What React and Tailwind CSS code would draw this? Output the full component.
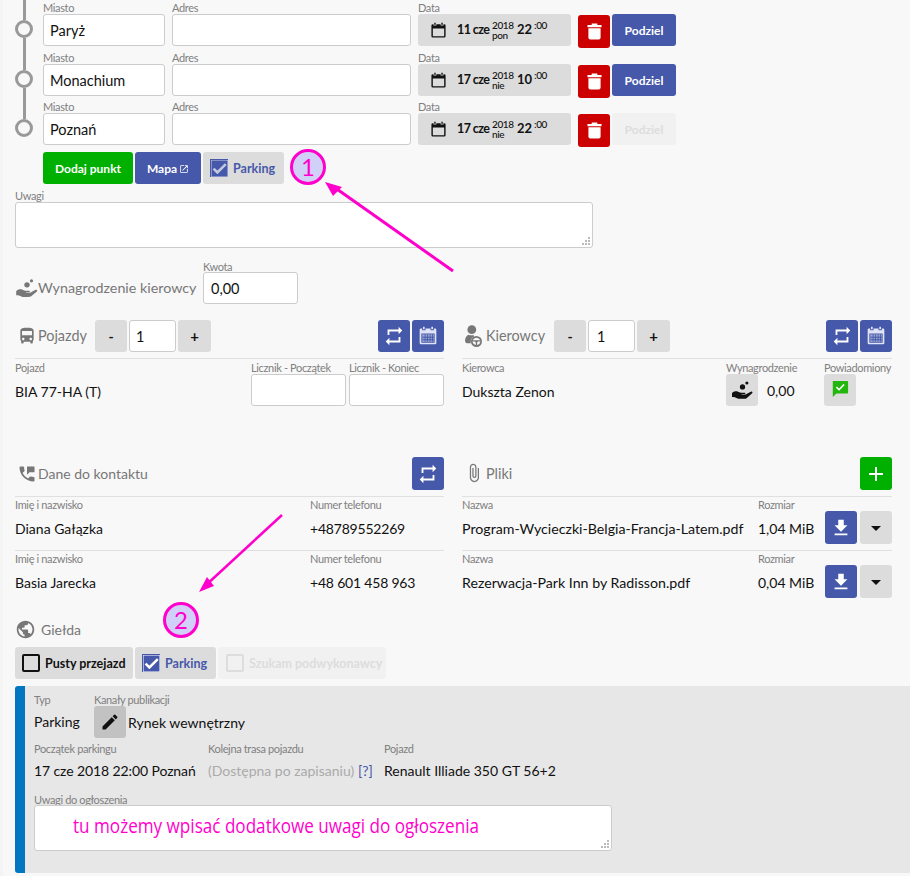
import React from "react";
import {
  MdRepeat,
  MdDirectionsBus,
  MdPermPhoneMsg,
  MdAttachFile,
  MdPublic,
  MdEdit,
  MdAdd,
  MdFileDownload,
  MdArrowDropDown,
  MdCheck,
  MdOpenInNew,
} from "react-icons/md";

const TrashIcon = ({ className }) => (
  <svg viewBox="0 0 16 17" className={className} fill="currentColor">
    <path d="M5 0h6v1.500h4.500V4H.5V1.500H5z" />
    <path d="M1.500 5h13v10a2 2 0 0 1-2 2h-9a2 2 0 0 1-2-2z" />
  </svg>
);

const CalendarIcon = ({ className }) => (
  <svg viewBox="0 0 24 24" className={className} fill="currentColor">
    <path d="M6 1h2v3H6zM16 1h2v3h-2z" />
    <path
      fillRule="evenodd"
      d="M4 3h1v2h4V3h6v2h4V3h1a2 2 0 0 1 2 2v15a2 2 0 0 1-2 2H4a2 2 0 0 1-2-2V5a2 2 0 0 1 2-2zm0 6v11h16V9z"
    />
  </svg>
);

const GridCalendarIcon = ({ className }) => (
  <svg viewBox="0 0 24 24" className={className} fill="currentColor">
    <path d="M6 1h2v3H6zM16 1h2v3h-2z" />
    <path
      fillRule="evenodd"
      d="M3.500 3H5v2h4V3h6v2h4V3h1.500A1.500 1.500 0 0 1 22 4.500v16a1.500 1.500 0 0 1-1.500 1.500h-17A1.500 1.500 0 0 1 2 20.500v-16A1.500 1.500 0 0 1 3.500 3zM4 9v11h16V9z"
    />
    <path d="M5 10h14v9H5z" opacity="0.55" />
    <path d="M8 10h1v9H8zM11 10h1v9h-1zM14 10h1v9h-1zM17 10h1v9h-1zM5 13h14v1H5zM5 16h14v1H5z" fill="#4658a9" />
  </svg>
);

const HandCoinsIcon = ({ className }) => (
  <svg viewBox="0 0 24 20" className={className} fill="currentColor">
    <circle cx="17" cy="2" r="1.800" />
    <circle cx="12" cy="6.500" r="3" />
    <path d="M0 13.500c2-2 4.500-2.500 7-1.500l3 1h4.500c1 0 1 1.600 0 1.600H11v.6h4.500l6-3.200c1.500-.7 2.500.8 1.500 1.800L17 19c-1 .8-2 1-3.500 1H8c-1.500 0-2.500-1-4-1.500-1.500-.4-3-.5-4-.5z" />
  </svg>
);

const DriverIcon = ({ className }) => (
  <svg viewBox="0 0 20 26" className={className} fill="currentColor">
    <circle cx="8" cy="5.500" r="5.200" />
    <path d="M4 11.500c1.500.8 4.500.8 6 .2.300 1 .6 1.500 1 1.800-2.500 1-4.300 3.300-4.300 6 0 .8.100 1.500.3 2H3.500C1.500 21.500 0 20.500 0 18.500c0-3 1.500-5.500 4-7z" />
    <path
      fillRule="evenodd"
      d="M13.500 13a6.500 6.500 0 1 1 0 13 6.500 6.500 0 0 1 0-13zM9 18h9a4.900 4.900 0 0 0-9 0zm-.3 1.500a4.900 4.900 0 0 0 4 4v-2.700l-1-1.300zm9.600 0h-3l-1 1.300v2.700a4.900 4.900 0 0 0 4-4z"
    />
  </svg>
);

const NotifiedIcon = ({ className }) => (
  <svg viewBox="0 0 20 20" className={className}>
    <path d="M2 1h16a1 1 0 0 1 1 1v12a1 1 0 0 1-1 1H6l-4 4z" fill="#22b60f" />
    <path d="M6 8l3 2.800L14.500 5" fill="none" stroke="#fff" strokeWidth="1.800" />
  </svg>
);

const Label = ({ children, className = "" }) => (
  <div className={`text-[11px] leading-[14px] tracking-[-0.35px] text-[#808080] whitespace-nowrap ${className}`}>
    {children}
  </div>
);

const TextBox = ({ value, className = "" }) => (
  <input
    readOnly
    value={value || ""}
    className={`block bg-white border border-[#cccccc] rounded-[3px] px-[6px] text-[14.5px] text-[#111111] outline-none ${className}`}
  />
);

const NoteBox = ({ children, className = "" }) => (
  <div className={`relative h-[46px] bg-white border border-[#cccccc] rounded-[3px] ${className}`}>
    {children}
    <svg className="absolute right-[1px] bottom-[1px]" width="9" height="9" fill="#bbbbbb">
      <path d="M6 0h2v2H6zM3 3h2v2H3zM6 3h2v2H6zM0 6h2v2H0zM3 6h2v2H3zM6 6h2v2H6z" />
    </svg>
  </div>
);

const ActionButton = ({ children, className = "" }) => (
  <button className={`flex items-center justify-center rounded-[3px] shrink-0 ${className}`}>
    {children}
  </button>
);

const Stop = ({ city, day, year, weekday, hour, rowClass, last, canSplit = true }) => (
  <div className={`flex ${rowClass}`}>
    <div className="w-[28px] shrink-0 flex flex-col items-start">
      <div className="w-[18px] flex flex-col items-center h-full">
        <div className="w-[3px] h-[20px] bg-[#999999]" />
        <div className="w-[18px] h-[18px] shrink-0 rounded-full border-[3px] border-[#999999]" />
        {!last && <div className="w-[3px] flex-1 bg-[#999999]" />}
      </div>
    </div>
    <div className="w-[129px] shrink-0">
      <Label className="pt-[1px] h-[14px]">Miasto</Label>
      <TextBox value={city} className="w-[122px] h-[32px]" />
    </div>
    <div className="w-[246px] shrink-0">
      <Label className="pt-[1px] h-[14px]">Adres</Label>
      <TextBox className="w-[239px] h-[32px]" />
    </div>
    <div className="w-[160px] shrink-0">
      <Label className="pt-[1px] h-[14px]">Data</Label>
      <div className="w-[153px] h-[32px] bg-[#dcdcdc] rounded-[3px] flex items-center pl-[12px] text-[#111111]">
        <CalendarIcon className="w-[17px] h-[17px] shrink-0" />
        <span className="ml-[10px] text-[12.5px] font-bold tracking-[-0.6px] w-[35px] whitespace-nowrap">{day}</span>
        <span className="flex flex-col text-[10px] leading-[10px] tracking-[-0.4px] w-[25px] font-medium">
          <span>{year}</span>
          <span>{weekday}</span>
        </span>
        <span className="text-[13px] font-bold">{hour}</span>
        <span className="text-[10px] leading-[10px] tracking-[-0.4px] font-medium ml-[2px] mb-[10px]">:00</span>
      </div>
    </div>
    <div className="pt-[15px] flex items-start">
      <ActionButton className="w-[32px] h-[33px] bg-[#cc0000] text-white">
        <TrashIcon className="w-[15px] h-[17px]" />
      </ActionButton>
      <ActionButton
        className={`w-[64px] h-[32px] ml-[2px] -mt-[1px] pt-[1px] text-[12px] font-bold ${
          canSplit ? "bg-[#4658a9] text-white" : "bg-[#f1f1f1] text-[#dddddd]"
        }`}
      >
        Podziel
      </ActionButton>
    </div>
  </div>
);

const SectionTitle = ({ icon, children, className = "" }) => (
  <div className={`flex items-center text-[#777777] whitespace-nowrap ${className}`}>
    <span className="w-[23px] flex justify-center shrink-0">{icon}</span>
    {children}
  </div>
);

const Stepper = ({ inputClass }) => (
  <div className="flex items-center">
    <ActionButton className="w-[32px] h-[32px] bg-[#dcdcdc] text-[14px] font-bold text-[#111111]">-</ActionButton>
    <TextBox value="1" className={`w-[47px] h-[32px] mx-[2px] ${inputClass}`} />
    <ActionButton className="w-[33px] h-[32px] bg-[#dcdcdc] text-[15px] font-bold text-[#111111]">+</ActionButton>
  </div>
);

const BlueButtons = () => (
  <div className="flex gap-[2px]">
    <ActionButton className="w-[32px] h-[32px] bg-[#4658a9] text-white">
      <MdRepeat size={22} />
    </ActionButton>
    <ActionButton className="w-[32px] h-[32px] bg-[#4658a9] text-[#dfe3f5]">
      <GridCalendarIcon className="w-[20px] h-[20px]" />
    </ActionButton>
  </div>
);

const CheckTile = ({ checked, disabled, dark, checkClass = "text-white", children, className = "" }) => (
  <div
    className={`h-[32px] flex items-center rounded-[3px] pl-[7px] text-[12.5px] font-bold whitespace-nowrap ${
      disabled ? "bg-[#f1f1f1] text-[#dddddd]" : "bg-[#dcdcdc]"
    } ${dark ? "text-[#111111]" : ""} ${!disabled && !dark ? "text-[#4658a9]" : ""} ${className}`}
  >
    {checked ? (
      <span className={`w-[18px] h-[18px] mr-[5px] bg-[#4658a9] flex items-center justify-center ${checkClass}`}>
        <MdCheck size={17} stroke="currentColor" strokeWidth={1.5} />
      </span>
    ) : (
      <span
        className={`w-[18px] h-[18px] mr-[5px] rounded-[2px] border-[2.5px] ${
          disabled ? "border-[#dddddd]" : "border-[#111111]"
        }`}
      />
    )}
    <span className="pt-[2px]">{children}</span>
  </div>
);

const Person = ({ name, phone }) => (
  <div className="border-t border-[#e0e0e0] h-[54px] flex">
    <div className="w-[295px] shrink-0">
      <Label className="mt-[1px]">Imię i nazwisko</Label>
      <div className="text-[14px] leading-[20px] mt-[7px] text-[#111111]">{name}</div>
    </div>
    <div>
      <Label className="mt-[1px]">Numer telefonu</Label>
      <div className="text-[14px] leading-[20px] mt-[7px] text-[#111111] tracking-[-0.2px]">{phone}</div>
    </div>
  </div>
);

const FileRow = ({ name, size }) => (
  <div className="border-t border-[#e0e0e0] h-[54px] flex">
    <div className="w-[296px] shrink-0">
      <Label className="mt-[1px]">Nazwa</Label>
      <div className="text-[14.2px] leading-[20px] mt-[7px] text-[#111111] whitespace-nowrap">{name}</div>
    </div>
    <div className="w-[67px] shrink-0">
      <Label className="mt-[1px]">Rozmiar</Label>
      <div className="text-[14px] leading-[20px] mt-[7px] text-[#111111] text-right w-[56px] whitespace-nowrap">{size}</div>
    </div>
    <div className="flex gap-[3px] mt-[14px]">
      <ActionButton className="w-[32px] h-[33px] bg-[#4658a9] text-white">
        <MdFileDownload size={22} />
      </ActionButton>
      <ActionButton className="w-[32px] h-[33px] bg-[#dcdcdc] text-[#111111]">
        <MdArrowDropDown size={24} />
      </ActionButton>
    </div>
  </div>
);

// arrows and numbered markers drawn over the page
const Annotations = () => (
  <svg className="absolute left-0 top-0 pointer-events-none" width="910" height="876">
    <g stroke="#ff00cc" fill="none">
      <path d="M453 271L334 187" strokeWidth="3" />
      <path d="M282 515L205 586" strokeWidth="2.500" />
      <circle cx="308" cy="167" r="16.500" fill="#d0d0f8" strokeWidth="3" />
      <circle cx="181" cy="620" r="16.500" fill="#d0d0f8" strokeWidth="3" />
    </g>
    <path d="M325 182L342 187L333 196Z" fill="#ff00cc" />
    <path d="M199 592L207 577L214 586Z" fill="#ff00cc" />
  </svg>
);

export default function App() {
  return (
    <div
      className="relative w-[910px] h-[876px] overflow-hidden bg-[#f4f4f4] text-[#111111]"
      style={{ fontFamily: "Lato, sans-serif" }}
    >
      <div className="ml-[3px] h-full bg-[#f8f8f8] pl-[12px]">
        <Stop city="Paryż" day="11 cze" year="2018" weekday="pon" hour="22" rowClass="h-[50px]" />
        <Stop city="Monachium" day="17 cze" year="2018" weekday="nie" hour="10" rowClass="h-[49px]" />
        <Stop city="Poznań" day="17 cze" year="2018" weekday="nie" hour="22" rowClass="h-[47px]" last canSplit={false} />

        <div className="flex gap-[2px] ml-[28px] mt-[6px]">
          <ActionButton className="w-[90px] h-[32px] pt-[1px] bg-[#00b000] text-white text-[12px] font-bold">Dodaj punkt</ActionButton>
          <ActionButton className="w-[66px] h-[32px] pt-[2px] bg-[#4658a9] text-white text-[12px] font-bold">
            Mapa
            <MdOpenInNew size={10} className="ml-[2px]" />
          </ActionButton>
          <CheckTile checked checkClass="text-[#c5cae0]" className="w-[81px]">Parking</CheckTile>
        </div>

        <Label className="mt-[5px] h-[13px]">Uwagi</Label>
        <NoteBox className="w-[578px]" />

        <div className="flex items-end mt-[12px]">
          <div className="h-[32px] flex items-center w-[188px]">
            <SectionTitle className="text-[14.3px]" icon={<HandCoinsIcon className="w-[22px] h-[18px]" />}>
              Wynagrodzenie kierowcy
            </SectionTitle>
          </div>
          <div>
            <Label className="h-[12px]">Kwota</Label>
            <TextBox value="0,00" className="w-[95px] h-[32px] pl-[7px]" />
          </div>
        </div>

        <div className="grid grid-cols-[429px_430px] gap-x-[18px] mt-[16px]">
          <div>
            <div className="flex items-center h-[32px]">
              <SectionTitle className="w-[80px] text-[14.4px]" icon={<MdDirectionsBus size={20} />}>Pojazdy</SectionTitle>
              <Stepper inputClass="pl-[6px]" />
              <div className="ml-auto">
                <BlueButtons />
              </div>
            </div>
            <div className="mt-[6px] border-t border-[#e0e0e0] h-[99px] flex">
              <div className="w-[236px] shrink-0">
                <Label className="mt-[2px]">Pojazd</Label>
                <div className="text-[14px] leading-[20px] mt-[7px] text-[#111111]">BIA 77-HA (T)</div>
              </div>
              <div className="w-[98px] shrink-0">
                <Label className="mt-[2px] h-[13px]">Licznik - Początek</Label>
                <TextBox className="w-[95px] h-[32px]" />
              </div>
              <div>
                <Label className="mt-[2px] h-[13px]">Licznik - Koniec</Label>
                <TextBox className="w-[95px] h-[32px]" />
              </div>
            </div>
          </div>

          <div>
            <div className="flex items-center h-[32px]">
              <SectionTitle className="w-[92px] text-[14.4px]" icon={<DriverIcon className="w-[17px] h-[22px]" />}>
                <span className="ml-[1px]">Kierowcy</span>
              </SectionTitle>
              <Stepper inputClass="pl-[8px]" />
              <div className="ml-auto">
                <BlueButtons />
              </div>
            </div>
            <div className="mt-[6px] border-t border-[#e0e0e0] h-[99px] flex">
              <div className="w-[264px] shrink-0">
                <Label className="mt-[2px]">Kierowca</Label>
                <div className="text-[14px] leading-[20px] mt-[7px] text-[#111111]">Dukszta Zenon</div>
              </div>
              <div className="w-[98px] shrink-0">
                <Label className="mt-[2px] h-[13px]">Wynagrodzenie</Label>
                <div className="flex items-center">
                  <ActionButton className="w-[32px] h-[32px] bg-[#dcdcdc] text-[#111111]">
                    <HandCoinsIcon className="w-[21px] h-[18px]" />
                  </ActionButton>
                  <span className="ml-[9px] text-[14px] text-[#111111]">0,00</span>
                </div>
              </div>
              <div>
                <Label className="mt-[2px] h-[13px]">Powiadomiony</Label>
                <ActionButton className="w-[32px] h-[32px] bg-[#dcdcdc]">
                  <NotifiedIcon className="w-[18px] h-[18px] mb-[2px]" />
                </ActionButton>
              </div>
            </div>
          </div>

          <div>
            <div className="flex items-center h-[33px]">
              <SectionTitle className="text-[14px]" icon={<MdPermPhoneMsg size={20} />}>Dane do kontaktu</SectionTitle>
              <ActionButton className="ml-auto w-[32px] h-[33px] bg-[#4658a9] text-white">
                <MdRepeat size={22} />
              </ActionButton>
            </div>
            <div className="mt-[6px]">
              <Person name="Diana Gałązka" phone="+48789552269" />
              <Person name="Basia Jarecka" phone="+48 601 458 963" />
            </div>
          </div>

          <div>
            <div className="flex items-center h-[33px]">
              <SectionTitle className="text-[14.4px]" icon={<MdAttachFile size={20} />}>
                <span className="ml-[1px]">Pliki</span>
              </SectionTitle>
              <ActionButton className="ml-auto w-[32px] h-[33px] bg-[#00b000] text-white">
                <MdAdd size={24} />
              </ActionButton>
            </div>
            <div className="mt-[6px]">
              <FileRow name="Program-Wycieczki-Belgia-Francja-Latem.pdf" size="1,04 MiB" />
              <FileRow name="Rezerwacja-Park Inn by Radisson.pdf" size="0,04 MiB" />
            </div>
          </div>
        </div>

        <div className="mt-[15px] h-[20px] flex items-center text-[14px] text-[#777777]">
          <MdPublic size={21} className="mr-[5px]" />
          Giełda
        </div>
        <div className="flex gap-[2px] mt-[8px]">
          <CheckTile dark className="w-[118px]">Pusty przejazd</CheckTile>
          <CheckTile checked className="w-[81px]">Parking</CheckTile>
          <CheckTile disabled className="w-[168px] pl-[8px]">Szukam podwykonawcy</CheckTile>
        </div>

        <div className="mt-[7px] h-[187px] bg-[#e7e7e7] border-l-[10px] border-[#0077c0] rounded-l-[3px] pl-[9px] pt-[7px]">
          <div className="flex">
            <div className="w-[60px]">
              <Label>Typ</Label>
              <div className="text-[14px] leading-[20px] mt-[5px]">Parking</div>
            </div>
            <div>
              <Label className="h-[13px]">Kanały publikacji</Label>
              <div className="flex items-center">
                <ActionButton className="w-[32px] h-[32px] bg-[#c2c2c2] text-[#111111]">
                  <MdEdit size={20} />
                </ActionButton>
                <span className="ml-[2px] text-[14px]">Rynek wewnętrzny</span>
              </div>
            </div>
          </div>
          <div className="flex mt-[4px]">
            <div className="w-[174px]">
              <Label>Początek parkingu</Label>
              <div className="text-[14px] leading-[20px] mt-[5px] whitespace-nowrap tracking-[-0.1px]">17 cze 2018 22:00 Poznań</div>
            </div>
            <div className="w-[176px]">
              <Label>Kolejna trasa pojazdu</Label>
              <div className="text-[14px] leading-[20px] mt-[5px] whitespace-nowrap text-[#aaaaaa]">
                (Dostępna po zapisaniu) <span className="text-[#4658a9]">[?]</span>
              </div>
            </div>
            <div>
              <Label>Pojazd</Label>
              <div className="text-[14px] leading-[20px] mt-[5px] whitespace-nowrap">Renault Illiade 350 GT 56+2</div>
            </div>
          </div>
          <Label className="mt-[12px] h-[12px]">Uwagi do ogłoszenia</Label>
          <NoteBox className="w-[578px]">
            <span
              className="absolute left-[38px] top-[6px] origin-left scale-x-[0.855] text-[20px] leading-[28px] text-[#ff00cc] whitespace-nowrap"
              style={{ fontFamily: "'Open Sans', sans-serif" }}
            >
              tu możemy wpisać dodatkowe uwagi do ogłoszenia
            </span>
          </NoteBox>
        </div>
      </div>

      <Annotations />
      <span className="absolute left-[291px] top-[150px] w-[34px] h-[34px] flex items-center justify-center text-[24px] text-[#ff00cc]">1</span>
      <span className="absolute left-[164px] top-[603px] w-[34px] h-[34px] flex items-center justify-center text-[24px] text-[#ff00cc]">2</span>
    </div>
  );
}
